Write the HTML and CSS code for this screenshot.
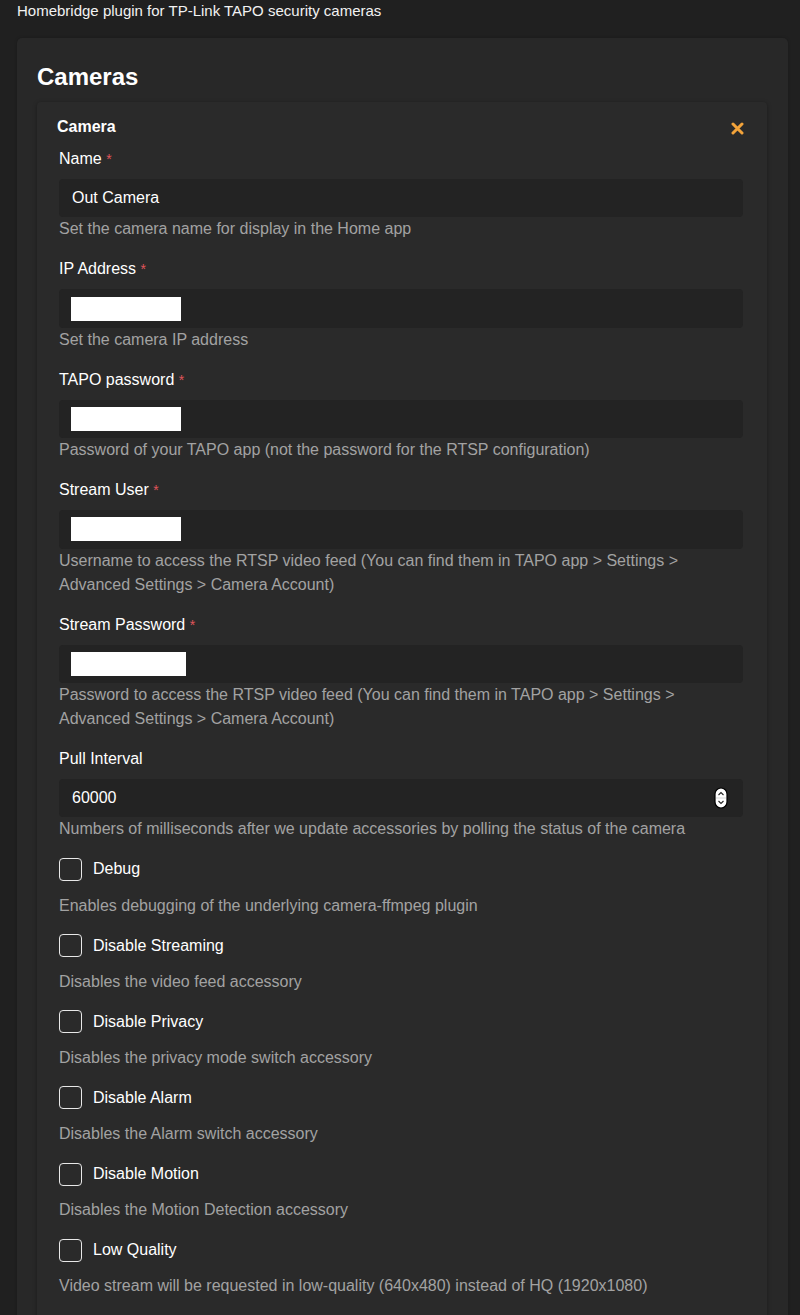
FILE: index.html
```html
<!DOCTYPE html>
<html lang="en">
<head>
<meta charset="utf-8">
<title>Homebridge TAPO</title>
<link rel="stylesheet" href="styles.css">
</head>
<body>
<div class="intro">Homebridge plugin for TP-Link TAPO security cameras</div>
<div class="panel">
  <h2 class="panel-title">Cameras</h2>
  <div class="card">
    <div class="card-head">
      <span class="card-title">Camera</span>
      <svg class="close" width="13" height="13" viewBox="0 0 13 13"><path d="M2 2 L11 11 M11 2 L2 11" stroke="#f2a33a" stroke-width="3" stroke-linecap="round"/></svg>
    </div>
    <div class="fields">
      <div class="field">
        <div class="label">Name <span class="req">*</span></div>
        <div class="input"><span class="value">Out Camera</span></div>
        <div class="help">Set the camera name for display in the Home app</div>
      </div>
      <div class="field">
        <div class="label">IP Address <span class="req">*</span></div>
        <div class="input"><span class="redact"></span></div>
        <div class="help">Set the camera IP address</div>
      </div>
      <div class="field">
        <div class="label">TAPO password <span class="req">*</span></div>
        <div class="input"><span class="redact"></span></div>
        <div class="help">Password of your TAPO app (not the password for the RTSP configuration)</div>
      </div>
      <div class="field">
        <div class="label">Stream User <span class="req">*</span></div>
        <div class="input"><span class="redact"></span></div>
        <div class="help">Username to access the RTSP video feed (You can find them in TAPO app &gt; Settings &gt; Advanced Settings &gt; Camera Account)</div>
      </div>
      <div class="field">
        <div class="label">Stream Password <span class="req">*</span></div>
        <div class="input"><span class="redact wide"></span></div>
        <div class="help">Password to access the RTSP video feed (You can find them in TAPO app &gt; Settings &gt; Advanced Settings &gt; Camera Account)</div>
      </div>
      <div class="field">
        <div class="label">Pull Interval</div>
        <div class="input number"><span class="value">60000</span>
          <svg class="spin" width="14" height="22" viewBox="0 0 14 22"><rect x="1" y="1" width="12" height="20" rx="6" fill="#fff" stroke="#000" stroke-width="1.2"/><path d="M4.5 8 L7 5.5 L9.5 8 M4.5 14 L7 16.5 L9.5 14" stroke="#222" stroke-width="1.1" fill="none"/><line x1="2" y1="11" x2="12" y2="11" stroke="#bbb" stroke-width="0.6"/></svg>
        </div>
        <div class="help">Numbers of milliseconds after we update accessories by polling the status of the camera</div>
      </div>
      <div class="check">
        <div class="check-row"><span class="box"></span><span class="check-label">Debug</span></div>
        <div class="help">Enables debugging of the underlying camera-ffmpeg plugin</div>
      </div>
      <div class="check">
        <div class="check-row"><span class="box"></span><span class="check-label">Disable Streaming</span></div>
        <div class="help">Disables the video feed accessory</div>
      </div>
      <div class="check">
        <div class="check-row"><span class="box"></span><span class="check-label">Disable Privacy</span></div>
        <div class="help">Disables the privacy mode switch accessory</div>
      </div>
      <div class="check">
        <div class="check-row"><span class="box"></span><span class="check-label">Disable Alarm</span></div>
        <div class="help">Disables the Alarm switch accessory</div>
      </div>
      <div class="check">
        <div class="check-row"><span class="box"></span><span class="check-label">Disable Motion</span></div>
        <div class="help">Disables the Motion Detection accessory</div>
      </div>
      <div class="check">
        <div class="check-row"><span class="box"></span><span class="check-label">Low Quality</span></div>
        <div class="help">Video stream will be requested in low-quality (640x480) instead of HQ (1920x1080)</div>
      </div>
    </div>
  </div>
</div>
</body>
</html>
```

FILE: styles.css
```css
html, body {
  margin: 0;
  padding: 0;
  background: #202020;
  font-family: "Liberation Sans", Arial, Helvetica, sans-serif;
  color: #f0f0f0;
}
body {
  height: 1315px;
  overflow: hidden;
}
.intro {
  font-size: 15px;
  line-height: 22px;
  padding-left: 17px;
  color: #f2f2f2;
}
.panel {
  margin: 16px 12px 0 17px;
  background: #282828;
  border-radius: 5px;
  padding: 20px 21px 40px 20px;
  box-shadow: 0 0 3px rgba(0,0,0,0.25);
}
.panel-title {
  margin: 0 0 7px 0;
  font-size: 24px;
  line-height: 37px;
  font-weight: bold;
  color: #fff;
}
.card {
  background: #2a2a2a;
  border-radius: 4px;
  padding: 14px 24px 30px 20px;
  box-shadow: 0 1px 4px rgba(0,0,0,0.35);
}
.card-head {
  display: flex;
  justify-content: space-between;
  align-items: center;
  height: 22px;
  margin-bottom: 9px;
}
.card-title {
  font-size: 16px;
  font-weight: bold;
  color: #fff;
}
.close {
  margin-right: -1px;
  margin-top: 3px;
}
.fields {
  margin-left: 2px;
  display: flex;
  flex-direction: column;
  gap: 16px;
}
.label {
  font-size: 16px;
  line-height: 24px;
  color: #fff;
  margin-bottom: 8px;
}
.req {
  color: #e0555a;
  font-size: 14px;
}
.input {
  height: 38.4px;
  background: #232323;
  border-radius: 4px;
  display: flex;
  align-items: center;
  padding: 0 15px 0 13px;
}
.input.number {
  justify-content: space-between;
}
.value {
  font-size: 16px;
  color: #fff;
}
.redact {
  display: block;
  width: 110px;
  height: 24px;
  background: #fff;
  margin-left: -1px;
}
.redact.wide {
  width: 115px;
}
.help {
  font-size: 16px;
  line-height: 24px;
  color: #a2a2a2;
}
.check-row {
  display: flex;
  align-items: center;
  height: 24px;
  margin-bottom: 12.2px;
}
.box {
  width: 21px;
  height: 21px;
  border: 1.5px solid #e8e8e8;
  border-radius: 4px;
  margin-right: 11px;
}
.check-label {
  font-size: 16px;
  color: #fff;
}
```
